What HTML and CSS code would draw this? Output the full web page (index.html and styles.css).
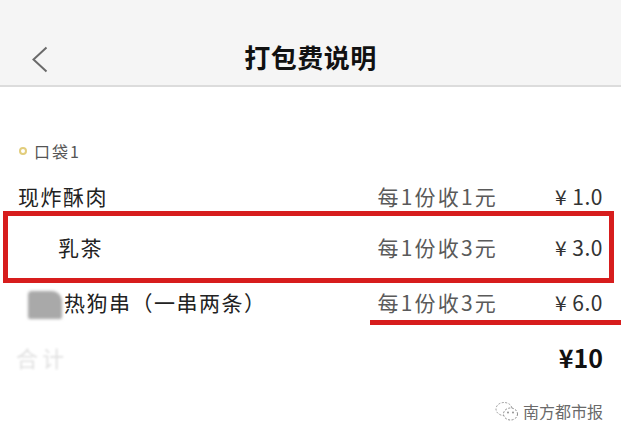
FILE: index.html
```html
<!DOCTYPE html>
<html lang="zh-CN">
<head>
    <meta charset="UTF-8">
    <meta name="viewport" content="width=device-width, initial-scale=1.0">
    <title>打包费说明</title>
    <link rel="stylesheet" href="styles.css">
</head>
<body>
    <div class="page">
        <header class="topbar">
            <button class="back-button" aria-label="返回">
                <svg width="16" height="27" viewBox="0 0 16 27">
                    <polyline points="14.5,1.5 1.5,13.5 14.5,25.5" fill="none" stroke="#6a6a6a" stroke-width="2"/>
                </svg>
            </button>
            <h1 class="topbar-title">打包费说明</h1>
            <span></span>
        </header>

        <main class="fee-list">
            <div class="pocket-label">
                <span class="pocket-dot"></span>
                <span>口袋1</span>
            </div>

            <div class="fee-row">
                <span class="fee-name">现炸酥肉</span>
                <span class="fee-rule">每1份收1元</span>
                <span class="fee-price">¥ 1.0</span>
            </div>

            <div class="mark-box">
                <div class="fee-row">
                    <span class="fee-name erased-start">乳茶</span>
                    <span class="fee-rule">每1份收3元</span>
                    <span class="fee-price">¥ 3.0</span>
                </div>
            </div>

            <div class="fee-row">
                <span class="fee-name"><span class="blur-thumb"></span>热狗串（一串两条）</span>
                <span class="fee-rule">每1份收3元</span>
                <span class="fee-price">¥ 6.0</span>
            </div>
            <div class="mark-line"></div>

            <div class="total-row">
                <span class="total-label">合计</span>
                <span class="total-price">¥10</span>
            </div>

            <div class="watermark">
                <svg width="24" height="21" viewBox="0 0 24 21">
                    <ellipse cx="9" cy="8" rx="8" ry="6.5" fill="none" stroke="#9a9a9a" stroke-width="1" stroke-dasharray="2 1.5"/>
                    <ellipse cx="15.5" cy="13" rx="7" ry="6" fill="#fff" stroke="#8a8a8a" stroke-width="1" stroke-dasharray="2 1.5"/>
                    <circle cx="13" cy="11.5" r="0.9" fill="#888"/>
                    <circle cx="18" cy="11.5" r="0.9" fill="#888"/>
                </svg>
                <span>南方都市报</span>
            </div>
        </main>
    </div>
</body>
</html>
```

FILE: styles.css
```css
body {
  margin: 0;
  background: #fff;
  font-family: "Noto Sans CJK SC", "Noto Sans", sans-serif;
  color: #222;
}

.page {
  height: 425px;
  background: #fff;
  overflow: hidden;
}

.topbar {
  height: 57px;
  padding-top: 28px;
  display: grid;
  grid-template-columns: 1fr auto 1fr;
  align-items: center;
  background: #f5f5f5;
  border-bottom: 2px solid #dcdcdc;
}

.back-button {
  justify-self: start;
  margin-left: 32px;
  margin-top: 6px;
  padding: 0;
  border: none;
  background: transparent;
  display: flex;
}

.topbar-title {
  margin: 0;
  font-size: 26px;
  font-weight: bold;
  color: #111;
  letter-spacing: 0.5px;
}

.fee-list {
  padding: 54px 18px 0 18px;
}

.pocket-label {
  display: flex;
  align-items: center;
  gap: 7px;
  height: 20px;
  font-size: 16px;
  letter-spacing: 2px;
  color: #555;
}

.pocket-dot {
  width: 4px;
  height: 4px;
  border: 2px solid #e2cd7c;
  border-radius: 50%;
  margin-left: 1px;
}

.fee-row {
  display: flex;
  align-items: center;
  height: 30px;
  font-size: 21px;
  letter-spacing: 1.5px;
}

.pocket-label + .fee-row {
  margin-top: 20px;
}

.fee-name {
  flex: 1;
  display: flex;
  align-items: center;
  color: #222;
}

.fee-rule {
  color: #5a5a5a;
  letter-spacing: 2.2px;
}

.fee-price {
  width: 105px;
  text-align: right;
  color: #333;
  letter-spacing: 0.5px;
}

.mark-box {
  margin: 0 -11px 4px -15px;
  padding: 16px 6px 16px 10px;
  border: 5px solid #d71d1d;
}

.erased-start {
  padding-left: 40px;
}

.blur-thumb {
  width: 34px;
  height: 28px;
  margin: 6px 2px 0 10px;
  background: #a9a9a9;
  border-radius: 4px 10px 2px 2px;
  filter: blur(1.5px);
}

.mark-line {
  height: 5px;
  margin: 3px -18px 0 352px;
  background: #d71d1d;
}

.total-row {
  display: flex;
  justify-content: space-between;
  align-items: center;
  height: 32px;
  margin-top: 16px;
}

.total-label {
  margin-left: -2px;
  font-size: 22px;
  letter-spacing: 4px;
  color: #333;
  opacity: 0.15;
  filter: blur(1px);
}

.total-price {
  font-size: 25px;
  font-weight: bold;
  color: #111;
}

.watermark {
  display: flex;
  justify-content: flex-end;
  align-items: center;
  gap: 4px;
  margin-top: 26px;
  font-size: 16px;
  color: #6a6a6a;
}
```
